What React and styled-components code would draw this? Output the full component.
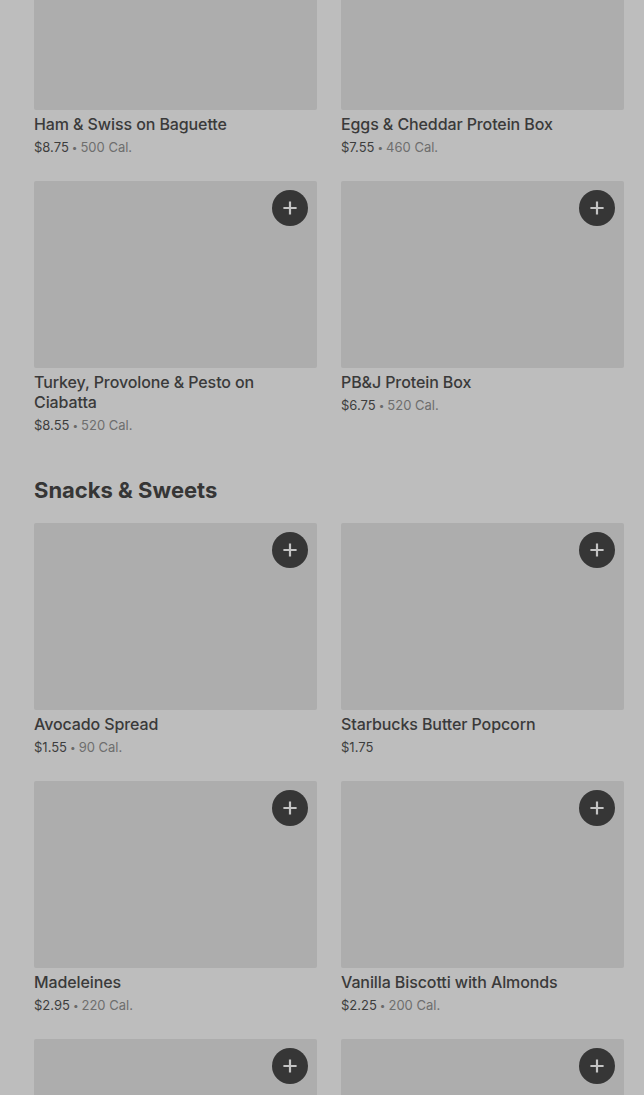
import styled, { createGlobalStyle } from "styled-components";

const GlobalStyle = createGlobalStyle`
  html, body {
    margin: 0;
    padding: 0;
    height: 100%;
    background: #bdbdbd;
    font-family: Inter, "Noto Sans", "Liberation Sans", sans-serif;
    overflow: hidden;
  }
`;

const sections = [
  {
    title: null,
    items: [
      { name: "Ham & Swiss on Baguette", price: "$8.75", cal: "500 Cal." },
      { name: "Eggs & Cheddar Protein Box", price: "$7.55", cal: "460 Cal." },
      { name: "Turkey, Provolone & Pesto on Ciabatta", price: "$8.55", cal: "520 Cal." },
      { name: "PB&J Protein Box", price: "$6.75", cal: "520 Cal." },
    ],
  },
  {
    title: "Snacks & Sweets",
    items: [
      { name: "Avocado Spread", price: "$1.55", cal: "90 Cal." },
      { name: "Starbucks Butter Popcorn", price: "$1.75" },
      { name: "Madeleines", price: "$2.95", cal: "220 Cal." },
      { name: "Vanilla Biscotti with Almonds", price: "$2.25", cal: "200 Cal." },
      { name: null },
      { name: null },
    ],
  },
];

const PlusIcon = () => (
  <svg width="14" height="14" viewBox="0 0 14 14" fill="none">
    <path d="M7 1.5v11M1.5 7h11" stroke="#c4c4c4" strokeWidth="2.2" strokeLinecap="square" />
  </svg>
);

const ProductCard = ({ item }) => (
  <Card>
    <Thumb>
      <AddButton type="button" aria-label="Add">
        <PlusIcon />
      </AddButton>
    </Thumb>
    {item.name && (
      <>
        <Name>{item.name}</Name>
        <Meta>
          <Price>{item.price}</Price>
          {item.cal && (
            <>
              <Dot>•</Dot>
              <Cal>{item.cal}</Cal>
            </>
          )}
        </Meta>
      </>
    )}
  </Card>
);

const App = () => {
  return (
    <>
      <GlobalStyle />
      <Page>
        {sections.map((section, i) => (
          <Section key={i} $first={i === 0}>
            {section.title && <SectionTitle>{section.title}</SectionTitle>}
            <Grid>
              {section.items.map((item, j) => (
                <ProductCard key={j} item={item} />
              ))}
            </Grid>
          </Section>
        ))}
      </Page>
    </>
  );
};

export default App;

const Page = styled.main`
  margin-top: -77px;
  padding: 0 20px 0 34px;
  display: flex;
  flex-direction: column;
`;

const Section = styled.section`
  display: flex;
  flex-direction: column;
  margin-top: ${({ $first }) => ($first ? "0" : "41px")};
`;

const SectionTitle = styled.h2`
  margin: 0 0 19px;
  font-size: 22px;
  line-height: 28px;
  font-weight: 700;
  letter-spacing: 0;
  color: #363636;
`;

const Grid = styled.div`
  display: grid;
  grid-template-columns: 283px 283px;
  column-gap: 24px;
  row-gap: 24px;
  align-items: start;
`;

const Card = styled.article`
  display: flex;
  flex-direction: column;
`;

const Thumb = styled.div`
  position: relative;
  height: 187px;
  background: #adadad;
  border-radius: 2px;
`;

const AddButton = styled.button`
  position: absolute;
  top: 9px;
  right: 9px;
  width: 36px;
  height: 36px;
  border: none;
  border-radius: 50%;
  background: #363636;
  padding: 0;
  display: flex;
  align-items: center;
  justify-content: center;
  cursor: pointer;
`;

const Name = styled.h3`
  margin: 4px 0 0;
  font-size: 16px;
  line-height: 20px;
  font-weight: 500;
  letter-spacing: -0.1px;
  color: #3a3a3a;
`;

const Meta = styled.div`
  margin-top: 3px;
  display: flex;
  align-items: center;
  gap: 3px;
  font-size: 13px;
  line-height: 20px;
`;

const Price = styled.span`
  color: #3d3d3d;
`;

const Dot = styled.span`
  color: #6a6a6a;
  font-size: 10px;
`;

const Cal = styled.span`
  color: #6e6e6e;
`;
